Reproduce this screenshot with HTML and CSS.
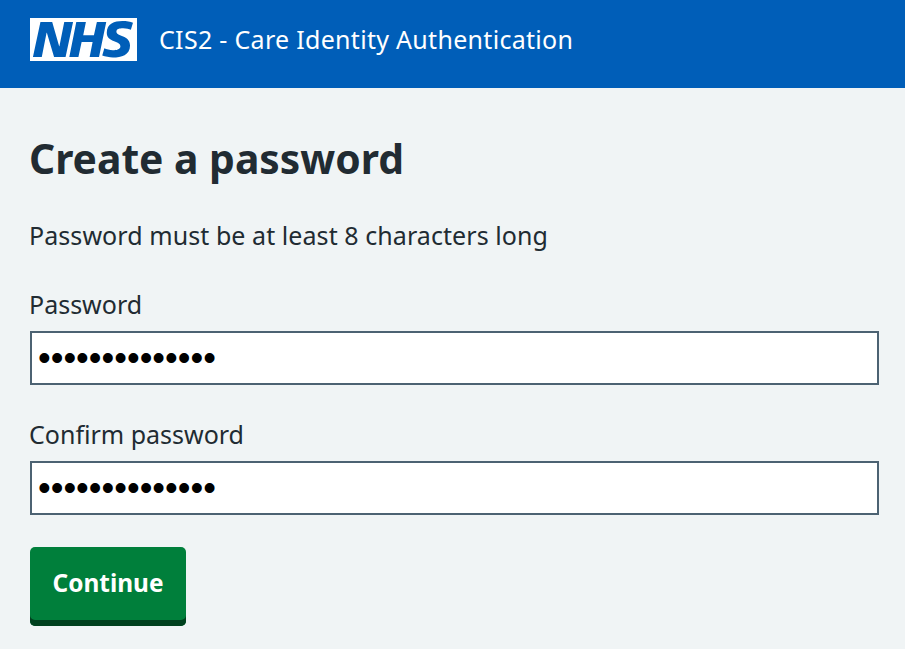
FILE: index.html
```html
<!DOCTYPE html>
<html lang="en">
<head>
<meta charset="utf-8">
<title>Create a password</title>
<link rel="stylesheet" href="styles.css">
</head>
<body>
<header class="header">
  <svg class="logo" viewBox="0 0 40 16" role="img" aria-label="NHS">
    <path fill="#fff" d="M0 0h40v16H0z"/>
    <path fill="#005eb8" d="M3.9 1.5h4.4l2.6 9h.1l1.8-9h3.3l-2.8 13H9l-2.7-9h-.1l-1.8 9H1.1M17.3 1.5h3.6l-1 4.9h4L25 1.5h3.5l-2.7 13h-3.5l1.1-5.6h-4.1l-1.2 5.6h-3.4M37.7 4.4c-.7-.3-1.6-.6-2.9-.6-1.4 0-2.5.2-2.5 1.3 0 1.8 5.1 1.2 5.1 5.1 0 3.6-3.3 4.5-6.4 4.5-1.3 0-2.9-.3-4-.7l.8-2.7c.7.4 2.1.7 3.2.7s2.8-.2 2.8-1.5c0-2.1-5.1-1.3-5.1-5 0-3.4 2.9-4.4 5.8-4.4 1.6 0 3.1.2 4 .6"/>
  </svg>
  <span class="service">CIS2 - Care Identity Authentication</span>
</header>
<main class="main">
  <h1 class="title">Create a password</h1>
  <p class="hint">Password must be at least 8 characters long</p>
  <form class="form">
    <div class="field">
      <label class="label" for="pw">Password</label>
      <input class="input" id="pw" type="password" value="abcdefghijklmn">
    </div>
    <div class="field">
      <label class="label" for="cpw">Confirm password</label>
      <input class="input" id="cpw" type="password" value="abcdefghijklmn">
    </div>
    <button class="button" type="button">Continue</button>
  </form>
</main>
</body>
</html>
```
FILE: styles.css
```css
* { box-sizing: border-box; }
html, body { margin: 0; height: 100%; }
body {
  background: #f0f4f5;
  color: #212b32;
  font-family: "Noto Sans", "Open Sans", sans-serif;
  overflow: hidden;
}
.header {
  height: 88px;
  background: #005eb8;
  display: flex;
  align-items: flex-start;
  padding: 18px 30px 0;
  gap: 22px;
}
.logo { width: 107px; height: 43px; display: block; flex: none; }
.service { color: #fff; font-size: 25px; line-height: 43px; letter-spacing: 0.3px; }
.main { padding: 0 26px 0 30px; }
.title { margin: 0 0 0 -1px; padding-top: 42px; font-size: 40.8px; line-height: 56px; font-weight: 700; }
.hint { margin: 0 0 0 -1px; padding-top: 32px; font-size: 25px; line-height: 35px; letter-spacing: 0.07px; }
.form { display: flex; flex-direction: column; align-items: flex-start; padding-top: 34px; }
.field { width: 100%; margin-bottom: 32px; display: flex; flex-direction: column; }
.label { font-size: 25px; line-height: 35px; margin: 0 0 9px -1px; }
.input {
  width: 100%;
  height: 54px;
  border: 2px solid #4c6272;
  border-radius: 0;
  background: #fff;
  padding: 0 6px;
  font-family: "Liberation Sans", sans-serif;
  font-size: 36.3px;
  color: #000;
  outline: none;
}
.button {
  width: 156px;
  height: 79px;
  border: 0;
  border-radius: 5px;
  background: #007f3b;
  box-shadow: inset 0 -6px 0 #00401e;
  color: #fff;
  font-family: inherit;
  font-size: 24.4px;
  font-weight: 700;
  padding: 0 0 8px;
}
```
